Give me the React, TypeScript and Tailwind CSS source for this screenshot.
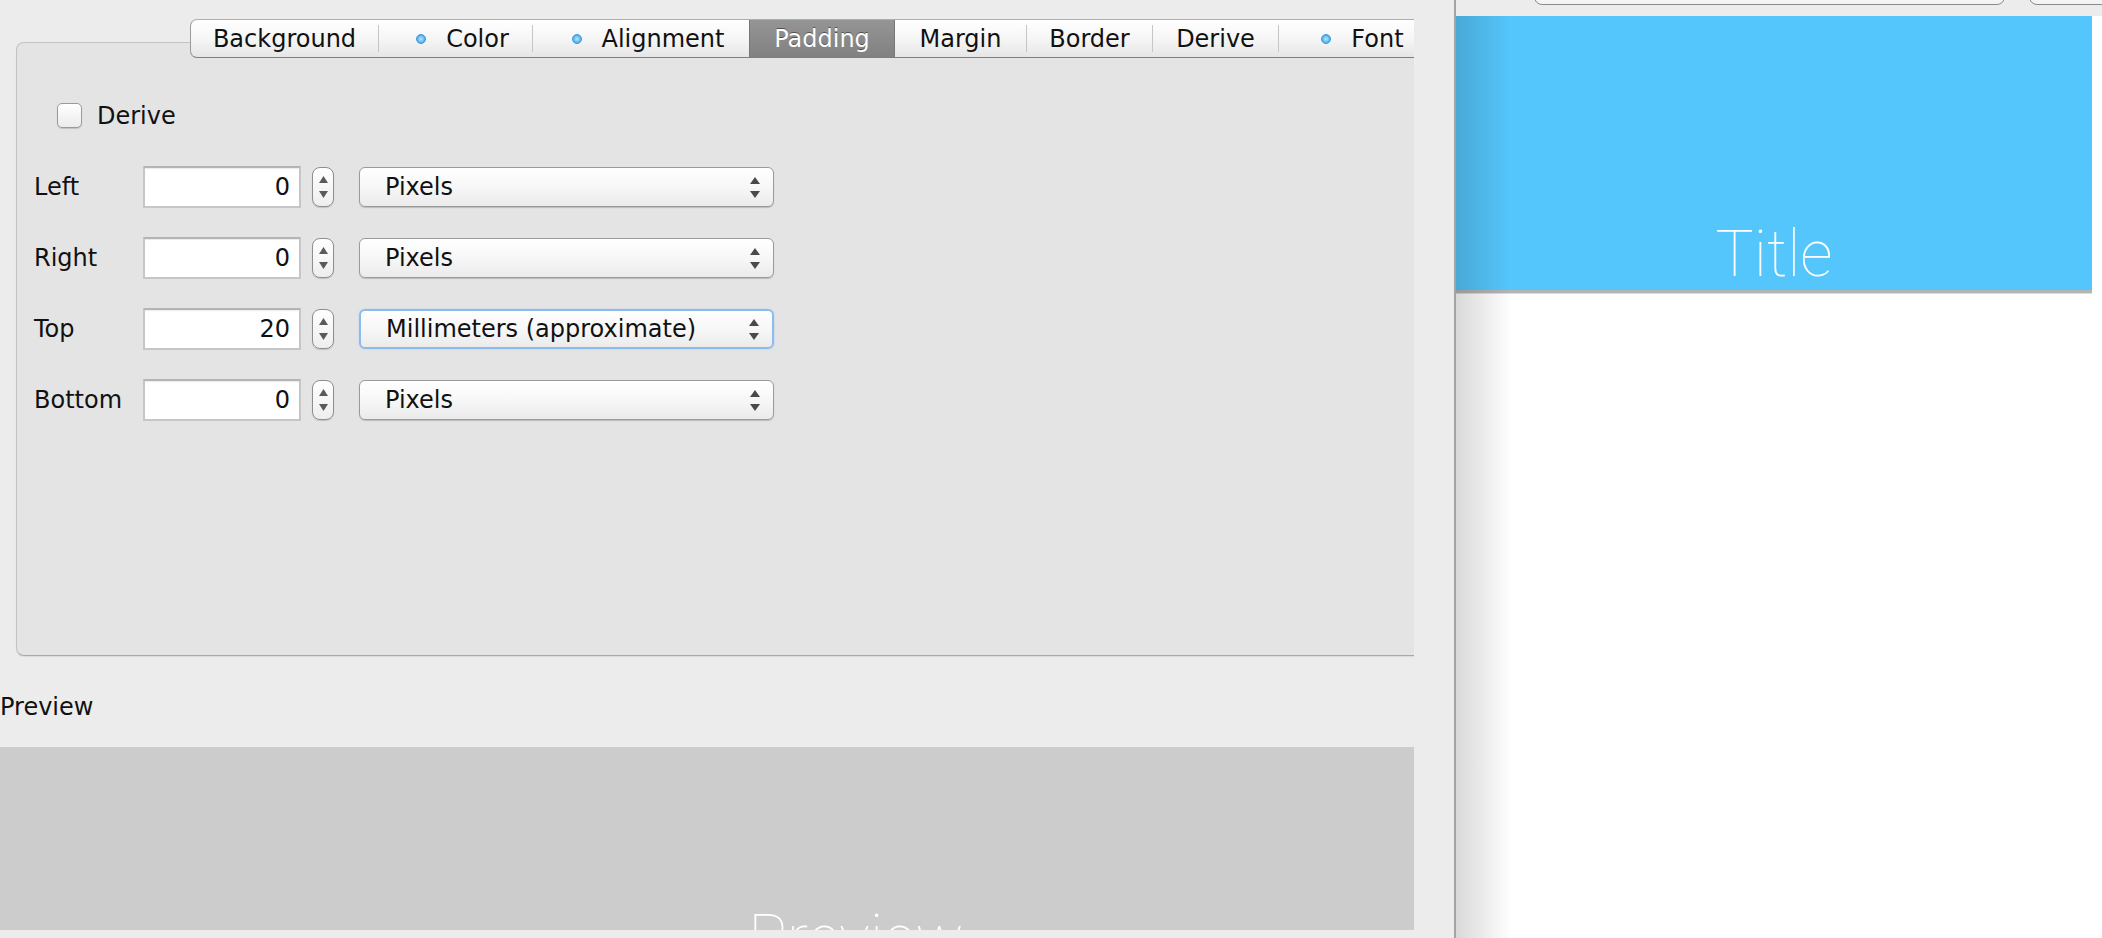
import React from 'react';

type Tab = { label: string; width: string; dot?: boolean; selected?: boolean };

const tabs: Tab[] = [
  { label: 'Background', width: 'w-[187px]' },
  { label: 'Color', width: 'w-[153px] pl-[14px]', dot: true },
  { label: 'Alignment', width: 'w-[216px] pl-[14px]', dot: true },
  { label: 'Padding', width: 'w-[146px]', selected: true },
  { label: 'Margin', width: 'w-[131px]' },
  { label: 'Border', width: 'w-[125px]' },
  { label: 'Derive', width: 'w-[125px]' },
  { label: 'Font', width: 'w-[153px] pl-[14px]', dot: true },
];

const rows = [
  { label: 'Left', value: '0', unit: 'Pixels' },
  { label: 'Right', value: '0', unit: 'Pixels' },
  { label: 'Top', value: '20', unit: 'Millimeters (approximate)', focused: true },
  { label: 'Bottom', value: '0', unit: 'Pixels' },
];

function Dot() {
  return (
    <span className="mr-[20px] h-[10px] w-[10px] shrink-0 rounded-full border border-[#3596dc] bg-[radial-gradient(circle,#bfe6ff_0%,#5cb6f0_60%,#3d9fe4_100%)]" />
  );
}

function TabBar() {
  return (
    <div className="relative z-10 ml-[174px] flex h-[39px] w-max rounded-l-[7px] border border-r-0 border-t-[#adadad] border-b-[#7e7e7e] border-l-[#9a9a9a] bg-gradient-to-b from-white via-[#f6f6f6] to-[#e6e6e6]">
      {tabs.map((t, i) => {
        const prev = tabs[i - 1];
        const showSep = i > 0 && !t.selected && !prev?.selected;
        return (
          <React.Fragment key={t.label}>
            {showSep && <div className="my-[5px] w-px shrink-0 bg-[#c6c6c6]" />}
            <div
              className={`flex shrink-0 items-center justify-center ${t.width} ${
                t.selected
                  ? 'border-x border-[#777] bg-gradient-to-b from-[#959595] to-[#818181] text-white [text-shadow:0_-1px_0_rgba(0,0,0,0.45)]'
                  : 'text-[#111]'
              }`}
            >
              {t.dot && <Dot />}
              <span>{t.label}</span>
            </div>
          </React.Fragment>
        );
      })}
    </div>
  );
}

function Spinner() {
  return (
    <div className="ml-[11px] flex h-[40px] w-[22px] shrink-0 flex-col items-center justify-center gap-[8px] rounded-[8px] border border-[#8e8e8e] bg-gradient-to-b from-white to-[#eeeeee] shadow-[0_1px_1px_rgba(0,0,0,0.15)]">
      <svg width="9" height="7" viewBox="0 0 9 7">
        <path d="M4.5 0 L9 7 L0 7 Z" fill="#5a5a5a" />
      </svg>
      <svg width="9" height="7" viewBox="0 0 9 7">
        <path d="M0 0 L9 0 L4.5 7 Z" fill="#5a5a5a" />
      </svg>
    </div>
  );
}

function Select({ text, focused }: { text: string; focused?: boolean }) {
  return (
    <div
      className={`ml-[25px] flex h-[40px] w-[415px] shrink-0 items-center justify-between rounded-[6px] bg-gradient-to-b from-white via-[#f7f7f7] to-[#ebebeb] pl-[25px] pr-[13px] ${
        focused
          ? 'border-2 border-[#8cbcec] shadow-[0_0_2px_#a9cdf3]'
          : 'border border-[#9a9a9a] shadow-[0_1px_1px_rgba(0,0,0,0.18)]'
      }`}
    >
      <span className="text-[#111]">{text}</span>
      <div className="flex flex-col items-center gap-[7px]">
        <svg width="10" height="7" viewBox="0 0 10 7">
          <path d="M5 0 L10 7 L0 7 Z" fill="#4a4a4a" />
        </svg>
        <svg width="10" height="7" viewBox="0 0 10 7">
          <path d="M0 0 L10 0 L5 7 Z" fill="#4a4a4a" />
        </svg>
      </div>
    </div>
  );
}

export default function App() {
  return (
    <div className="flex h-[938px] w-[2102px] overflow-hidden bg-[#ececec] font-['DejaVu_Sans',sans-serif] text-[24px] text-black">
      {/* left: style editor */}
      <div className="flex w-[1414px] shrink-0 flex-col overflow-hidden">
        <div className="pl-[16px] pt-[19px]">
          <TabBar />
          <div className="-mt-[16px] h-[614px] w-[1589px] shrink-0 rounded-[8px] border border-[#c2c2c2] border-b-[#a9a9a9] bg-[#e4e4e4] pl-[17px] pt-[60px] shadow-[0_1px_1px_rgba(0,0,0,0.08)]">
            <div className="ml-[23px] flex h-[25px] items-center">
              <div className="h-[25px] w-[25px] rounded-[5px] border border-[#9a9a9a] bg-gradient-to-b from-white to-[#ebebeb] shadow-[0_1px_1px_rgba(0,0,0,0.15)]" />
              <span className="ml-[15px] text-[#111]">Derive</span>
            </div>
            <div className="mt-[38px] flex flex-col gap-[29px]">
              {rows.map((r) => (
                <div key={r.label} className="flex h-[42px] items-center">
                  <span className="w-[109px] shrink-0 text-[#111]">{r.label}</span>
                  <div className="flex h-[42px] w-[158px] shrink-0 items-center justify-end border-2 border-[#c6c6c6] border-t-[#b4b4b4] bg-white pr-[9px] text-[#111] shadow-[inset_0_1px_1px_rgba(0,0,0,0.08)]">
                    {r.value}
                  </div>
                  <Spinner />
                  <Select text={r.unit} focused={r.focused} />
                </div>
              ))}
            </div>
          </div>
        </div>

        <div className="mt-[37px] h-[28px] leading-[28px] text-[#111]">Preview</div>

        <div className="mt-[26px] h-[183px] w-[1414px] shrink-0 overflow-hidden bg-[#cccccc]">
          <div className="flex w-[1712px] justify-center pt-[160px]">
            <span className="font-['Roboto',sans-serif] text-[64px] font-thin leading-none text-white">Preview</span>
          </div>
        </div>
      </div>

      <div className="w-[40px] shrink-0" />

      {/* right: device preview */}
      <div className="flex w-[648px] shrink-0 flex-col border-l-2 border-[#a4a4a4]">
        <div className="flex h-[16px] shrink-0 items-end overflow-hidden">
          <div className="mb-[11px] ml-[78px] h-[34px] w-[471px] shrink-0 rounded-b-[8px] border border-[#8a8a8a] bg-gradient-to-b from-white to-[#f3f3f3]" />
          <div className="mb-[11px] ml-[24px] h-[34px] w-[200px] shrink-0 rounded-b-[8px] border border-[#8a8a8a] bg-gradient-to-b from-white to-[#f3f3f3]" />
        </div>
        <div className="relative flex-1 bg-white">
          <div className="h-[277px] w-[636px] border-b-[3px] border-[#b4b4b4] bg-[#55c6fc]">
            <div className="flex justify-center pt-[207px]">
              <span className="font-['Roboto',sans-serif] text-[64px] font-thin leading-none text-white">Title</span>
            </div>
          </div>
          <div className="h-px w-[636px] bg-[#dedede]" />
          <div className="pointer-events-none absolute inset-y-0 left-0 w-[56px] bg-gradient-to-r from-black/15 to-transparent" />
        </div>
      </div>
    </div>
  );
}
